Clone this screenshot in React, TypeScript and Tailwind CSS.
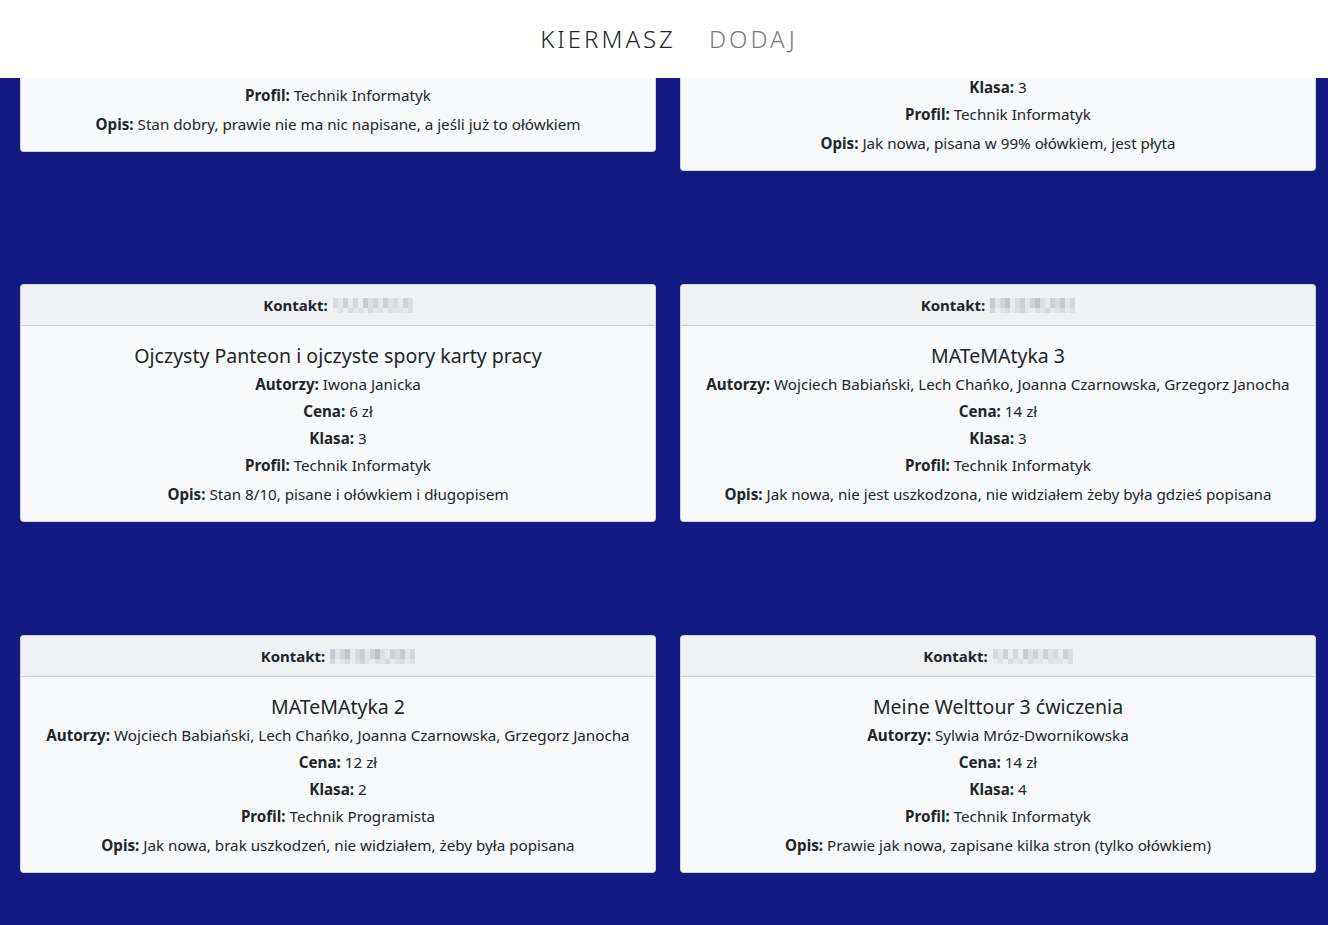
import React from "react";

// Kiermasz książek: lista ogłoszeń w dwóch kolumnach

interface Ogloszenie {
  tytul: string;
  autorzy: string;
  cena: number;
  klasa: number;
  profil: string;
  opis: string;
  kontakt: string[]; // kolory "rozmytego" numeru
}

const blur1 = ["#d9dadd", "#e4e5e8", "#cfd1d6", "#e9eaec", "#d6d7db", "#eceded", "#c9cbd0", "#dfe0e3", "#d2d4d8", "#e6e7e9", "#cdd0d4", "#e1e2e5", "#d8d9dc", "#e8e9eb", "#d0d2d6", "#dcdde0"];
const blur2 = ["#c8cbd2", "#e2e3e6", "#d3d5da", "#c2c5cc", "#eaeaec", "#d8dade", "#cbced4", "#e5e6e8", "#d0d2d7", "#bfc2c9", "#dddee1", "#e8e8ea", "#cfd1d6", "#d9dbde", "#c6c9cf", "#e4e5e7", "#d4d6da"];

const ogloszenia: Ogloszenie[][] = [
  [
    {
      tytul: "Historia i społeczeństwo",
      autorzy: "Tomasz Maćkowski",
      cena: 10,
      klasa: 3,
      profil: "Technik Informatyk",
      opis: "Stan dobry, prawie nie ma nic napisane, a jeśli już to ołówkiem",
      kontakt: blur1,
    },
    {
      tytul: "Oblicza geografii 3",
      autorzy: "Marcin Świtoniak",
      cena: 15,
      klasa: 3,
      profil: "Technik Informatyk",
      opis: "Jak nowa, pisana w 99% ołówkiem, jest płyta",
      kontakt: blur2,
    },
  ],
  [
    {
      tytul: "Ojczysty Panteon i ojczyste spory karty pracy",
      autorzy: "Iwona Janicka",
      cena: 6,
      klasa: 3,
      profil: "Technik Informatyk",
      opis: "Stan 8/10, pisane i ołówkiem i długopisem",
      kontakt: blur1,
    },
    {
      tytul: "MATeMAtyka 3",
      autorzy: "Wojciech Babiański, Lech Chańko, Joanna Czarnowska, Grzegorz Janocha",
      cena: 14,
      klasa: 3,
      profil: "Technik Informatyk",
      opis: "Jak nowa, nie jest uszkodzona, nie widziałem żeby była gdzieś popisana",
      kontakt: blur2,
    },
  ],
  [
    {
      tytul: "MATeMAtyka 2",
      autorzy: "Wojciech Babiański, Lech Chańko, Joanna Czarnowska, Grzegorz Janocha",
      cena: 12,
      klasa: 2,
      profil: "Technik Programista",
      opis: "Jak nowa, brak uszkodzeń, nie widziałem, żeby była popisana",
      kontakt: blur2,
    },
    {
      tytul: "Meine Welttour 3 ćwiczenia",
      autorzy: "Sylwia Mróz-Dwornikowska",
      cena: 14,
      klasa: 4,
      profil: "Technik Informatyk",
      opis: "Prawie jak nowa, zapisane kilka stron (tylko ołówkiem)",
      kontakt: blur1,
    },
  ],
];

function Rozmyte({ kolory }: { kolory: string[] }) {
  return (
    <span className="ml-[5px] inline-flex h-[15px] flex-col overflow-hidden align-[-2px]">
      <span className="flex h-[10px]">
        {kolory.map((k, i) => (
          <span key={i} className="h-full w-[5px]" style={{ background: k }} />
        ))}
      </span>
      <span className="flex h-[5px] opacity-60">
        {kolory.map((k, i) => (
          <span key={i} className="h-full w-[5px]" style={{ background: kolory[(i + 3) % kolory.length] }} />
        ))}
      </span>
    </span>
  );
}

function Karta({ o, className = "" }: { o: Ogloszenie; className?: string }) {
  return (
    <div className={`flex-1 rounded-[4px] border border-black/15 bg-[#f8f9fa] text-center text-[#212529] ${className}`}>
      <div className="flex h-[41px] items-center justify-center rounded-t-[4px] border-b border-black/15 bg-[#f0f1f3] text-[15px]">
        <b className="font-bold">Kontakt:</b>
        <Rozmyte kolory={o.kontakt} />
      </div>
      <div className="px-4 pt-[15px] pb-[13px] text-[15.2px] leading-[27px]">
        <h5 className="text-[19.5px] leading-[30px]">{o.tytul}</h5>
        <p>
          <b className="font-bold">Autorzy:</b> {o.autorzy}
        </p>
        <p>
          <b className="font-bold">Cena:</b> {o.cena} zł
        </p>
        <p>
          <b className="font-bold">Klasa:</b> {o.klasa}
        </p>
        <p>
          <b className="font-bold">Profil:</b> {o.profil}
        </p>
        <p className="mt-[2px]">
          <b className="font-bold">Opis:</b> {o.opis}
        </p>
      </div>
    </div>
  );
}

export default function App() {
  return (
    <div
      className="relative h-[925px] overflow-hidden bg-[#111a80]"
      style={{ fontFamily: '"Noto Sans", "Open Sans", sans-serif' }}
    >
      {/* Nawigacja */}
      <nav className="absolute inset-x-0 top-0 z-10 flex h-[78px] items-center justify-center gap-[33px] bg-white pl-[10px]">
        <span className="text-[24px] font-light tracking-[3px] text-[#212529]">KIERMASZ</span>
        <span className="text-[24px] font-light tracking-[3px] text-[#7a7a7a]">DODAJ</span>
      </nav>

      {/* Lista ogłoszeń (przewinięta) */}
      <div className="-mt-[86px] flex flex-col gap-[113px] pl-[20px] pr-[12px]">
        {ogloszenia.map((wiersz, i) => (
          <div key={i} className="flex items-start gap-6">
            <Karta o={wiersz[0]} />
            <Karta o={wiersz[1]} className={i === 0 ? "mt-[19px]" : ""} />
          </div>
        ))}
      </div>
    </div>
  );
}
